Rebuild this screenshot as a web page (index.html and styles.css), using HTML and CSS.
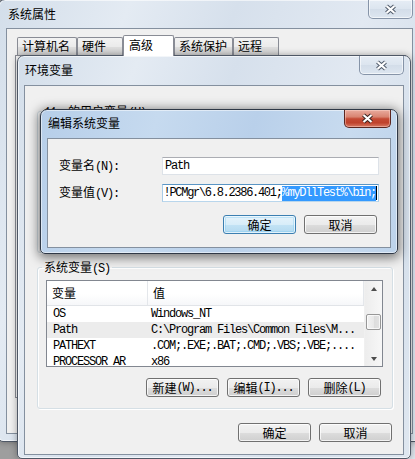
FILE: index.html
```html
<!DOCTYPE html>
<html lang="zh-CN">
<head>
<meta charset="utf-8">
<title>编辑系统变量</title>
<link rel="stylesheet" href="styles.css">
</head>
<body>
<div class="desk">

  <section class="win inactive w-sys">
    <header class="cap">
      <span class="cap-title">系统属性</span>
      <span class="xbtn xbtn-in">
        <svg width="13" height="11" viewBox="0 0 13 11"><path d="M2.5 2L10.5 9M10.5 2L2.5 9" stroke="#505b6b" stroke-width="4.2"/><path d="M2.5 2L10.5 9M10.5 2L2.5 9" stroke="#fff" stroke-width="2.2"/></svg>
      </span>
    </header>
    <div class="client sys-client">
      <div class="tabs">
        <div class="tab t1">计算机名</div>
        <div class="tab t2">硬件</div>
        <div class="tab t3 sel">高级</div>
        <div class="tab t4">系统保护</div>
        <div class="tab t5">远程</div>
      </div>
      <div class="tabpanel"></div>
    </div>
  </section>

  <section class="win inactive w-env">
    <header class="cap">
      <span class="cap-title">环境变量</span>
      <span class="xbtn xbtn-in">
        <svg width="13" height="11" viewBox="0 0 13 11"><path d="M2.5 2L10.5 9M10.5 2L2.5 9" stroke="#505b6b" stroke-width="4.2"/><path d="M2.5 2L10.5 9M10.5 2L2.5 9" stroke="#fff" stroke-width="2.2"/></svg>
      </span>
    </header>
    <div class="client env-client">
      <fieldset class="grp grp-user">
        <legend><span class="m">11</span><span class="sp"></span>的用户变量<span class="m">(U)</span></legend>
      </fieldset>
      <fieldset class="grp grp-sys">
        <legend>系统变量<span class="m">(S)</span></legend>
        <div class="list">
          <div class="list-main">
            <div class="lhead">
              <div class="hc c1">变量</div>
              <div class="hc c2">值</div>
            </div>
            <div class="lrow"><span class="c1 m">OS</span><span class="c2 m">Windows_NT</span></div>
            <div class="lrow hl"><span class="c1 m">Path</span><span class="c2 m">C:\Program Files\Common Files\M...</span></div>
            <div class="lrow"><span class="c1 m">PATHEXT</span><span class="c2 m">.COM;.EXE;.BAT;.CMD;.VBS;.VBE;....</span></div>
            <div class="lrow"><span class="c1 m">PROCESSOR_AR</span><span class="c2 m">x86</span></div>
          </div>
          <div class="vscroll">
            <div class="sbtn"><span class="arr up"></span></div>
            <div class="track"><div class="thumb"></div></div>
            <div class="sbtn"><span class="arr down"></span></div>
          </div>
        </div>
        <div class="btnrow grp-btns">
          <button class="btn">新建<span class="m">(W)...</span></button>
          <button class="btn">编辑<span class="m">(I)...</span></button>
          <button class="btn">删除<span class="m">(L)</span></button>
        </div>
      </fieldset>
      <div class="btnrow foot">
        <button class="btn">确定</button>
        <button class="btn">取消</button>
      </div>
    </div>
  </section>

  <section class="win active w-edit">
    <header class="cap">
      <span class="cap-title">编辑系统变量</span>
      <span class="xbtn xbtn-red">
        <svg width="13" height="11" viewBox="0 0 13 11"><path d="M2.5 2L10.5 9M10.5 2L2.5 9" stroke="#3c2420" stroke-width="4.2"/><path d="M2.5 2L10.5 9M10.5 2L2.5 9" stroke="#fff" stroke-width="2.2"/></svg>
      </span>
    </header>
    <div class="client edit-client">
      <div class="form">
        <label class="lbl">变量名<span class="m">(N):</span></label>
        <div class="field"><span class="m">Path</span></div>
        <label class="lbl">变量值<span class="m">(V):</span></label>
        <div class="field focus"><span class="val m">!PCMgr\6.8.2386.401;<span class="selx">%myDllTest%\bin;</span></span><span class="caret"></span></div>
      </div>
      <div class="btnrow dlg-btns">
        <button class="btn def">确定</button>
        <button class="btn">取消</button>
      </div>
    </div>
  </section>

</div>
</body>
</html>
```

FILE: styles.css
```css
* { box-sizing: border-box; }
html, body { margin: 0; padding: 0; }
body {
  width: 415px;
  height: 459px;
  overflow: hidden;
  background: #9e9e9e;
  font-family: "Noto Sans CJK SC", sans-serif;
  font-size: 12px;
  color: #000;
}
.desk {
  position: relative;
  width: 415px;
  height: 459px;
  overflow: hidden;
  background: linear-gradient(90deg, #9e9e9e 0, #9e9e9e 400px, #dfe6ee 400px);
}
.m {
  font-family: "Liberation Mono", "DejaVu Sans Mono", monospace;
  font-size: 12px;
  letter-spacing: -1.2px;
  color: #000;
}

/* ---------- windows ---------- */
.win {
  position: absolute;
  display: flex;
  flex-direction: column;
  border: 1px solid #4f5866;
  border-radius: 7px 7px 5px 5px;
}
.inactive {
  background: linear-gradient(112deg, #d3deea 0%, #e4ebf3 22%, #d6e0ec 40%, #e2e9f2 62%, #d4dfeb 80%, #dfe7f0 100%);
  box-shadow: 0 0 7px rgba(0,0,0,.35), inset 0 0 0 1px rgba(255,255,255,.6);
}
.active {
  background: linear-gradient(105deg, #b6cee9 0%, #c6daef 30%, #b9d0ea 55%, #c8dbef 80%, #bdd3eb 100%);
  border-color: #2f3846;
  box-shadow: 0 2px 11px 2px rgba(0,0,0,.5), inset 0 0 0 1px rgba(255,255,255,.5);
}
.cap {
  flex: none;
  display: flex;
  justify-content: space-between;
  align-items: flex-start;
}
.cap-title {
  line-height: 12px;
  margin-top: 8px;
  padding-left: 2px;
  white-space: nowrap;
}
.xbtn {
  flex: none;
  display: flex;
  align-items: center;
  justify-content: center;
  width: 45px;
  height: 19px;
  border: 1px solid #8694a8;
  border-top: none;
  border-radius: 0 0 5px 5px;
}
.xbtn-in {
  background: linear-gradient(#e6edf5, #dce5ef 50%, #d3dde9 51%, #dde6f0);
  box-shadow: inset 0 0 0 1px rgba(255,255,255,.6);
}
.xbtn-red {
  width: 47px;
  height: 18px;
  border-color: #5b2620;
  background: linear-gradient(#e9ab9e 0%, #d98572 40%, #c44a34 52%, #bf422c 75%, #d87a64 100%);
  box-shadow: inset 0 0 0 1px rgba(255,220,210,.45);
}
.client {
  flex: 1;
  border: 1px solid #84909f;
  background: #f0f0f0;
  min-height: 0;
}

/* ---------- 系统属性 ---------- */
.w-sys {
  left: -2px;
  top: -1px;
  width: 425px;
  height: 443px;
  padding: 0 9px 7px 7px;
}
.w-sys .cap { height: 28px; }
.sys-client { display: flex; flex-direction: column; }
.tabs {
  display: flex;
  align-items: flex-end;
  height: 26px;
  padding-left: 10px;
  flex: none;
}
.tab {
  height: 18px;
  border: 1px solid #898c95;
  border-bottom: none;
  border-radius: 2px 2px 0 0;
  padding: 2px 0 0 4px;
  line-height: 12px;
  white-space: nowrap;
  background: linear-gradient(#f3f3f3, #ebebeb 50%, #dedede 51%, #d2d2d2);
}
.t1 { width: 60px; }
.t2 { width: 46px; }
.t3 { width: 51px; }
.t4 { width: 59px; }
.t5 { width: 46px; }
.tab.sel {
  height: 21px;
  padding: 3px 0 0 5px;
  background: #fff;
  position: relative;
  z-index: 1;
  margin-bottom: -1px;
}
.tabpanel {
  margin: 0 6px 0 8px;
  height: 343px;
  border: 1px solid #898c95;
  background: #fcfcfc;
}

/* ---------- 环境变量 ---------- */
.w-env {
  left: 17px;
  top: 55px;
  width: 394px;
  height: 404px;
  padding: 0 6px 3px 6px;
}
.w-env .cap { height: 29px; }
.w-env .cap-title { padding-left: 1px; }
.env-client {
  display: flex;
  flex-direction: column;
  padding: 19px 10px 0 12px;
}
.grp {
  margin: 0;
  padding: 7px 0 11px 0;
  border: 1px solid #d5dfe5;
  border-radius: 3px;
  min-width: 0;
  box-shadow: 1px 1px 0 #fff, inset 1px 1px 0 #fff;
}
.grp legend {
  padding: 0 2px;
  margin-left: 4px;
  line-height: 12px;
  height: 12px;
  white-space: nowrap;
}
.sp { display: inline-block; width: 12px; }
.grp-user { height: 148px; flex: none; }
.grp-sys { margin-top: 8px; flex: none; }

.list {
  margin: 0 9px 0 8px;
  height: 87px;
  border: 1px solid #828790;
  background: #fff;
  display: flex;
  overflow: hidden;
}
.list-main {
  width: 317px;
  flex: none;
}
.lhead {
  display: grid;
  grid-template-columns: 101px 216px;
  height: 25px;
  border-bottom: 1px solid #e1e4e8;
  background: linear-gradient(#ffffff 0%, #ffffff 55%, #f6f7f9 100%);
}
.hc {
  display: flex;
  align-items: center;
  border-right: 1px solid #e4e7eb;
  padding-bottom: 1px;
}
.hc.c1 { padding-left: 5px; }
.hc.c2 { padding-left: 5px; }
.lrow {
  display: grid;
  grid-template-columns: 101px 216px;
  height: 16px;
  line-height: 16px;
  white-space: nowrap;
}
.lrow .c1 { padding-left: 6px; overflow: hidden; }
.lrow .c2 { padding-left: 3px; overflow: hidden; }
.lrow.hl { background: #ececec; }

.vscroll {
  width: 18px;
  flex: none;
  display: flex;
  flex-direction: column;
  background: linear-gradient(90deg, #ededed, #f7f7f7);
  border-left: 1px solid #f0f0f0;
}
.sbtn {
  height: 17px;
  flex: none;
  display: flex;
  align-items: center;
  justify-content: center;
}
.track { flex: 1; }
.thumb {
  margin: 16px 1px 0 1px;
  height: 16px;
  border: 1px solid #979797;
  border-radius: 2px;
  background: linear-gradient(90deg, #f2f2f2, #e8e8e8 50%, #dcdcdc 51%, #e2e2e2);
  box-shadow: inset 0 0 0 1px rgba(255,255,255,.7);
}
.arr {
  width: 0;
  height: 0;
  border-left: 3.5px solid transparent;
  border-right: 3.5px solid transparent;
}
.arr.up { border-bottom: 4px solid #4d4d4d; margin-top: -2px; }
.arr.down { border-top: 4px solid #4d4d4d; margin-top: 2px; }

.btnrow {
  display: flex;
  justify-content: flex-end;
  gap: 8px;
  flex: none;
}
.grp-btns { margin: 11px 11px 0 0; }
.foot { margin: 14px 1px 0 0; }

.btn {
  width: 73px;
  height: 19px;
  padding: 0;
  margin: 0;
  border: 1px solid #707070;
  border-radius: 3px;
  font-family: "Noto Sans CJK SC", sans-serif;
  font-size: 12px;
  line-height: 12px;
  color: #000;
  display: flex;
  align-items: center;
  justify-content: center;
  white-space: nowrap;
  background: linear-gradient(#f2f2f2 0%, #ebebeb 50%, #dddddd 51%, #cfcfcf 100%);
  box-shadow: inset 0 0 0 1px rgba(255,255,255,.75);
}
.btn.def {
  border-color: #3c7fb1;
  background: linear-gradient(#e6f3fb 0%, #d8edf9 50%, #c3e3f5 51%, #b3d9f0 100%);
  box-shadow: inset 0 0 0 1px rgba(255,255,255,.7), inset 0 0 0 2px rgba(120,200,240,.35);
}

/* ---------- 编辑系统变量 ---------- */
.w-edit {
  left: 40px;
  top: 109px;
  width: 358px;
  height: 145px;
  padding: 0 6px 5px 6px;
}
.w-edit .cap { height: 28px; }
.w-edit .cap-title { margin-top: 7px; padding-left: 1px; }
.edit-client {
  display: flex;
  flex-direction: column;
  padding: 18px 0 0 11px;
}
.form {
  display: grid;
  grid-template-columns: 103px 217px;
  row-gap: 9px;
  align-items: center;
}
.lbl { line-height: 12px; white-space: nowrap; }
.field {
  height: 18px;
  border: 1px solid #dde2e8;
  border-top-color: #abadb3;
  background: #fff;
  display: flex;
  align-items: center;
  padding-left: 2px;
  white-space: nowrap;
  overflow: hidden;
}
.field.focus {
  border-color: #5a95c4 #a9cbe6 #b9d6ec #a9cbe6;
  justify-content: flex-end;
  padding: 0 1px 0 0;
}
.val { line-height: 16px; white-space: nowrap; flex: none; letter-spacing: -1.3px; }
.selx { background: #3399ff; color: #fff; display: inline-block; line-height: 15px; }
.caret { width: 1px; height: 14px; background: #000; flex: none; }
.dlg-btns { margin: 13px 13px 0 0; }
```
